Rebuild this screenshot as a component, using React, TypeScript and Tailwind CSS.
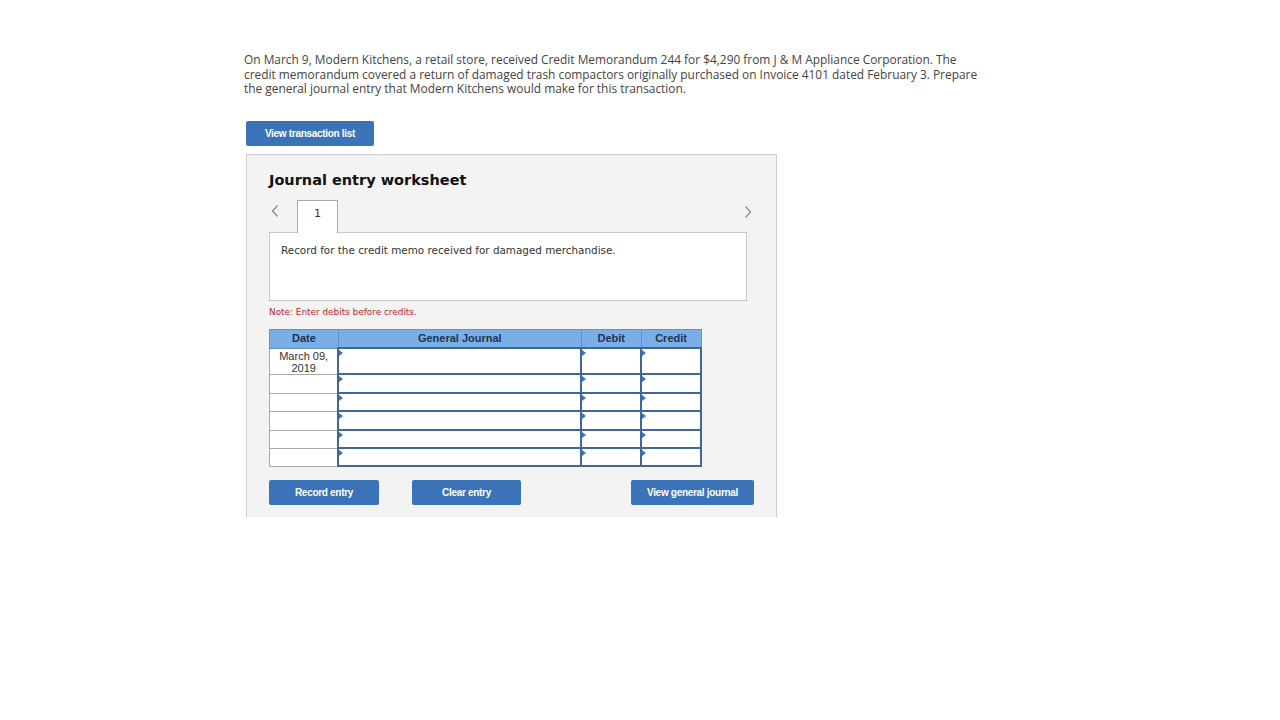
import React from "react";

const rows = [
  { date: ["March 09,", "2019"], tall: true },
  { date: null, h: 19 },
  { date: null, h: 18 },
  { date: null, h: 19 },
  { date: null, h: 18 },
  { date: null, h: 18 },
];

function Marker() {
  return (
    <span className="absolute left-0 top-[1px] h-0 w-0 border-y-[3px] border-l-[4px] border-y-transparent border-l-[#3b73b9]" />
  );
}

function InputCell({ w }: { w: number }) {
  return (
    <td
      className="relative border-2 border-[#41679a] bg-white p-0"
      style={{ width: w }}
    >
      <Marker />
    </td>
  );
}

export default function App() {
  return (
    <div className="min-h-[720px] w-[1280px] bg-white">
      <div className="pl-[244px] pt-[52px]">
        <p
          className="text-[11.9px] leading-[14.5px] text-[#444]"
          style={{ fontFamily: '"Open Sans", "Liberation Sans", sans-serif' }}
        >
          On March 9, Modern Kitchens, a retail store, received Credit Memorandum 244 for $4,290 from J &amp; M Appliance Corporation. The
          <br />
          credit memorandum covered a return of damaged trash compactors originally purchased on Invoice 4101 dated February 3. Prepare
          <br />
          the general journal entry that Modern Kitchens would make for this transaction.
        </p>

        <button
          className="ml-[2px] mt-[25px] flex h-[25px] w-[128px] items-center justify-center rounded-[2px] bg-[#3b73b9] text-[10px] font-bold tracking-[-0.3px] text-white"
          style={{ fontFamily: '"Liberation Sans", Arial, sans-serif' }}
        >
          View transaction list
        </button>

        <div className="ml-[2px] mt-[8px] h-[363px] w-[531px] border-x border-t border-[#cfcfcf] bg-[#f3f3f3] pl-[22px] pt-[16px]">
          <h2
            className="text-[14.5px] font-bold leading-[18px] text-[#111]"
            style={{ fontFamily: '"DejaVu Sans", Verdana, sans-serif' }}
          >
            Journal entry worksheet
          </h2>

          {/* tab strip */}
          <div className="mt-[11px] flex h-[33px] w-[484px] items-start justify-between">
            <div className="flex items-start">
              <span className="mt-[4px] flex w-[28px] items-center pl-[1px] text-[#8a8a8a]">
                <svg width="10" height="14" viewBox="0 0 10 14" fill="none">
                  <path d="M7.5 1.5 L2.5 7 L7.5 12.5" stroke="#8a8a8a" strokeWidth="1.3" />
                </svg>
              </span>
              <div
                className="relative z-10 flex h-[33px] w-[41px] items-start justify-center border-x border-t border-[#a9a9a9] bg-white pt-[5px] text-[11px] text-[#333]"
                style={{ fontFamily: '"DejaVu Sans", Verdana, sans-serif' }}
              >
                1
              </div>
            </div>
            <span className="mt-[5px]">
              <svg width="10" height="14" viewBox="0 0 10 14" fill="none">
                <path d="M2.5 1.5 L7.5 7 L2.5 12.5" stroke="#8a8a8a" strokeWidth="1.3" />
              </svg>
            </span>
          </div>

          <div
            className="-mt-px h-[69px] w-[478px] border border-[#c8c8c8] bg-white pl-[11px] pt-[10px] text-[10.4px] leading-[14px] text-[#333]"
            style={{ fontFamily: '"DejaVu Sans", Verdana, sans-serif' }}
          >
            Record for the credit memo received for damaged merchandise.
          </div>

          <p
            className="mt-[5px] text-[8.9px] leading-[12px] text-[#c0272d]"
            style={{ fontFamily: '"DejaVu Sans", Verdana, sans-serif' }}
          >
            Note: Enter debits before credits.
          </p>

          <table
            className="mt-[11px] border-collapse text-[11px] text-[#333]"
            style={{ fontFamily: '"Liberation Sans", Arial, sans-serif', width: 433 }}
          >
            <thead>
              <tr className="h-[19px] bg-[#79aee6] font-bold text-[#1e3554]">
                <th className="w-[69px] border border-[#6d8fbd] p-0 text-center text-[11px] font-bold">Date</th>
                <th className="w-[244px] border border-[#6d8fbd] p-0 text-center text-[11px] font-bold">General Journal</th>
                <th className="w-[60px] border border-[#6d8fbd] p-0 text-center text-[11px] font-bold">Debit</th>
                <th className="w-[60px] border border-[#6d8fbd] p-0 text-center text-[11px] font-bold">Credit</th>
              </tr>
            </thead>
            <tbody>
              {rows.map((r, i) => (
                <tr key={i} style={{ height: r.tall ? 26 : r.h }}>
                  <td className="w-[69px] border border-[#a8a8a8] bg-white p-0 text-center align-top text-[11px] leading-[12px] text-[#333]">
                    {r.date ? (
                      <div className="pt-[1px]">
                        {r.date[0]}
                        <br />
                        {r.date[1]}
                      </div>
                    ) : null}
                  </td>
                  <InputCell w={244} />
                  <InputCell w={60} />
                  <InputCell w={60} />
                </tr>
              ))}
            </tbody>
          </table>

          <div
            className="mt-[13px] flex w-[485px] items-center text-[10px] font-bold tracking-[-0.3px] text-white"
            style={{ fontFamily: '"Liberation Sans", Arial, sans-serif' }}
          >
            <button className="flex h-[25px] w-[110px] items-center justify-center rounded-[2px] bg-[#3b73b9]">
              Record entry
            </button>
            <button className="ml-[33px] flex h-[25px] w-[109px] items-center justify-center rounded-[2px] bg-[#3b73b9]">
              Clear entry
            </button>
            <button className="ml-auto flex h-[25px] w-[123px] items-center justify-center rounded-[2px] bg-[#3b73b9]">
              View general journal
            </button>
          </div>
        </div>
      </div>
    </div>
  );
}
